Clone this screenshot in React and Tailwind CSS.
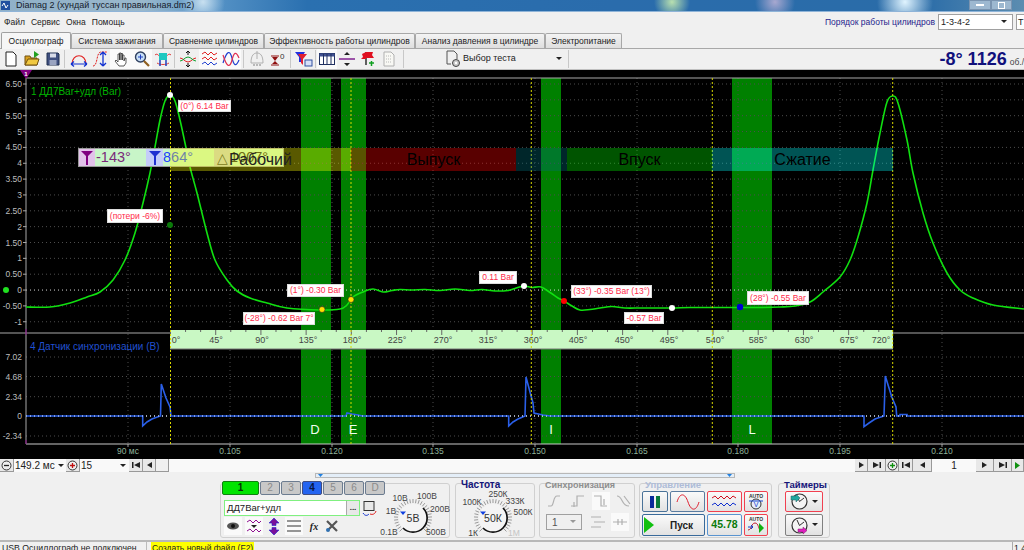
import React from 'react'

// --- chart data, in page pixels ---
const pressure = [[26,307],[50,307],[70,303],[87,297],[100,292],[113,280],[125,260],[135,233],[143,203],[150,173],[155,147],[160,120],[165,101],[170,95],[175,101],[180,120],[185,143],[190,167],[197,193],[207,233],[215,260],[227,280],[237,291],[250,298],[267,303],[287,308],[320,310],[340,309],[347,305],[353,297],[363,292],[373,289],[383,292],[392,290.5],[400,289.5],[412,290],[425,289.5],[440,290.5],[455,289],[470,290.5],[482,289.5],[495,291],[508,290.5],[515,288.5],[524,286],[532,287.5],[541,287],[550,292.5],[558,298],[564,301],[572,306],[580,310],[590,309.5],[600,308],[612,306.5],[625,308],[640,308],[655,308],[672,308],[690,307.5],[710,307.5],[725,307.5],[740,307.5],[760,307.5],[780,307],[795,306],[810,302],[823,292],[840,277],[850,260],[858,237],[867,203],[873,170],[880,133],[887,102],[893,96],[898,103],[907,140],[913,173],[923,213],[933,243],[947,273],[960,290],[973,298],[993,305],[1024,309]]

const sync = '26,416 142.7,416 142.7,426 147,422 152,419 160,416 160.5,416 161.3,384 166,398 170,407 171,416 346,416 347,413 352,414 358,415 362,416 508.7,416 508.7,426 513,422 518,419 525,416 526,377 530,392 533,403 534,413 543,415 550,416 864,416 864,426.7 869,423 875,419 884,416 885.3,376 889,388 891.7,396.7 896,407 896.7,416 900,416 900,414.5 907,414.5 907,416 1024,416'

const smooth = (pts) => {
  let d = `M${pts[0][0]} ${pts[0][1]}`
  for (let i = 0; i < pts.length - 1; i++) {
    const p0 = pts[i - 1] || pts[i], p1 = pts[i], p2 = pts[i + 1], p3 = pts[i + 2] || p2
    d += ` C${p1[0] + (p2[0] - p0[0]) / 6} ${p1[1] + (p2[1] - p0[1]) / 6} ${p2[0] - (p3[0] - p1[0]) / 6} ${p2[1] - (p3[1] - p1[1]) / 6} ${p2[0]} ${p2[1]}`
  }
  return d
}

const yTicks = ['6.50','6','5.50','5','4.50','4','3.50','3','2.50','2','1.50','1','0.50','0','-0.50','-1']
const syncTicks = [['7.02',357],['4.68',376.5],['2.34',396.7],['0',416],['-2.34',436]]
const timeTicks = [['90 мс',128],['0.105',230],['0.120',332],['0.135',433],['0.150',535],['0.165',637],['0.180',738],['0.195',840],['0.210',942]]
const rulerLabels = [['0°',176],['45°',216],['90°',262],['135°',308],['180°',352],['225°',397],['270°',443],['315°',488],['360°',533],['405°',578],['450°',624],['495°',669],['540°',715],['585°',758],['630°',804],['675°',849],['720°',881]]
const bands = [[301,30,'D',315],[341,25,'E',353],[541,20,'I',551],[732,40,'L',752]]
const cursors = [170.5,351,531.3,712.3,892.7]

function Chart() {
  return (
    <svg className="absolute inset-0" width="1024" height="389" viewBox="0 70 1024 389" fontFamily="Liberation Sans, sans-serif">
      {bands.map(([x, w]) => <rect key={x} x={x} y="78" width={w} height="366" fill="#008000" />)}

      {/* сетка */}
      {yTicks.map((t, i) => {
        const y = 84 + i * 15.85
        return (
          <g key={t}>
            <line x1="26" x2="1024" y1={y} y2={y} stroke={t === '0' ? '#d8d8d8' : '#4d4d4d'} strokeDasharray="1 3" />
            <line x1="23" x2="26" y1={y} y2={y} stroke="#aaa" />
            <text x="22" y={y + 3} textAnchor="end" fontSize="8.5" fill="#bdbdbd">{t}</text>
          </g>
        )
      })}
      {syncTicks.map(([t, y]) => (
        <g key={t}>
          <line x1="26" x2="1024" y1={y} y2={y} stroke={t === '0' ? '#d8d8d8' : '#4d4d4d'} strokeDasharray="1 3" />
          <text x="22" y={y + 3} textAnchor="end" fontSize="8.5" fill="#bdbdbd">{t}</text>
        </g>
      ))}
      {timeTicks.map(([t, x]) => (
        <g key={t}>
          <line x1={x} x2={x} y1="78" y2="444" stroke="#4d4d4d" strokeDasharray="1 3" />
          <line x1={x} x2={x} y1="444" y2="447" stroke="#999" />
          <text x={x} y="454" textAnchor="middle" fontSize="8.5" fill="#8fb39a">{t}</text>
        </g>
      ))}

      <line x1="26" x2="1024" y1="78" y2="78" stroke="#a8a8a8" />
      <line x1="0" x2="1024" y1="333" y2="333" stroke="#a8a8a8" />
      <line x1="26" x2="1024" y1="444" y2="444" stroke="#c8c8c8" />
      <line x1="26" x2="26" y1="78" y2="444" stroke="#a8a8a8" />
      <path d="M20 70h12l-6 9z" fill="#800080" />
      <text x="26" y="76" textAnchor="middle" fontSize="6" fontWeight="bold" fill="#fff">1</text>
      <line x1="26" x2="26" y1="329" y2="335" stroke="#800080" />
      <line x1="26" x2="26" y1="440" y2="444" stroke="#800080" />

      <path d={smooth(pressure)} fill="none" stroke="#10e010" strokeWidth="1.6" />
      <polyline points={sync} fill="none" stroke="#2a5fe8" strokeWidth="1.6" />
      <line x1="26" x2="1024" y1="416" y2="416" stroke="#d8e4ff" strokeDasharray="1 3" />

      {/* линейка углов */}
      <rect x="170" y="330" width="723" height="19" fill="#c9f8c4" />
      <line x1="170" x2="893" y1="349" y2="349" stroke="#777" />
      {Array.from({ length: 48 }, (_, i) => (
        <line key={i} x1={170.5 + i * 15.07} x2={170.5 + i * 15.07} y1="330" y2={i % 3 === 0 ? 335 : 332} stroke="#666" />
      ))}
      {rulerLabels.map(([t, x]) => <text key={t} x={x} y="343" textAnchor="middle" fontSize="9" fill="#444">{t}</text>)}

      {cursors.map((x) => <line key={x} x1={x} x2={x} y1="78" y2="444" stroke="#d8d800" strokeDasharray="2 2" />)}

      {bands.map(([x, , l, cx]) => <text key={l} x={cx} y="434" textAnchor="middle" fontSize="13" fill="#f0fff0">{l}</text>)}

      <circle cx="170" cy="95" r="3" fill="#fff" />
      <circle cx="170" cy="225" r="3" fill="#0a7a0a" />
      <circle cx="322" cy="309.5" r="3" fill="#ffe000" stroke="#222" strokeWidth=".6" />
      <circle cx="351" cy="299.5" r="3" fill="#ffe000" stroke="#222" strokeWidth=".6" />
      <circle cx="524" cy="286" r="3" fill="#fff" />
      <circle cx="564" cy="301" r="3" fill="#f00" />
      <circle cx="672" cy="308" r="3" fill="#fff" />
      <circle cx="740" cy="307" r="3.200" fill="#0000d0" />
      <circle cx="6" cy="290" r="3" fill="#20e020" />
    </svg>
  )
}

const tags = [
  ['(0°) 6.14 Bar', 'left-[178px] top-[30px] w-[53px] h-[12px]'],
  ['(потери -6%)', 'left-[107px] top-[139px] w-[56px] h-[14px]'],
  ['(1°) -0.30 Bar', 'left-[287px] top-[214px] w-[57px] h-[13px]'],
  ['(-28°) -0.62 Bar 7°', 'left-[243px] top-[242px] w-[72px] h-[13px]'],
  ['0.11 Bar', 'left-[479px] top-[201px] w-[38px] h-[13px]'],
  ['(33°) -0.35 Bar (13°)', 'left-[571px] top-[215px] w-[81px] h-[13px]'],
  ['-0.57 Bar', 'left-[624px] top-[242px] w-[40px] h-[12px]'],
  ['(28°) -0.55 Bar', 'left-[747px] top-[221px] w-[62px] h-[14px]'],
]

const Funnel = ({ color }) => (
  <svg width="14" height="16" viewBox="0 0 14 16"><path d="M1 1h12L8 6v9H6V6z" fill={color} /></svg>
)

function Scope() {
  return (
    <div className="relative h-[389px] w-full shrink-0 overflow-hidden bg-black">
      <Chart />
      <div className="absolute left-[31px] top-[15px] text-[10px] leading-[14px] text-[#00b400]">1 ДД7Bar+удл (Bar)</div>
      <div className="absolute left-[30px] top-[270px] text-[10px] leading-[14px] text-[#2050d0]">4 Датчик синхронизации (В)</div>

      {/* панель курсоров */}
      <div className="absolute left-[78px] top-[78px] flex h-[19px] w-[206px] items-center border border-[#9a9a9a] text-[14.5px] leading-none">
        <div className="flex h-full w-[16px] items-center justify-center bg-[#e2c2ea]"><Funnel color="#800080" /></div>
        <div className="flex h-full w-[51px] items-center bg-[#c8f5c8] pl-px text-[#7a2a7a]">-143°</div>
        <div className="flex h-full w-[17px] items-center justify-center bg-[#c4ccf8]"><Funnel color="#2030d0" /></div>
        <div className="flex h-full w-[51px] items-center bg-[#c8f5c8] text-[#2040ff]">864°</div>
        <div className="flex h-full w-[16px] items-center justify-center bg-[#c8c8c8] text-[14px] text-[#333]">△</div>
        <div className="flex h-full flex-1 items-center bg-[#c8f5c8] text-[#222]">1007°</div>
      </div>

      {/* фазы цикла */}
      <div className="absolute left-[170px] top-[78px] flex h-[23px] items-center text-[16px] leading-none text-black">
        <div className="flex h-full w-[181px] items-center justify-center bg-[rgba(255,255,0,0.35)] text-[#222]">Рабочий</div>
        <div className="flex h-full w-[165px] items-center justify-center bg-[rgba(255,0,0,0.35)]">Выпуск</div>
        <div className="h-full w-[51px] bg-[rgba(0,110,120,0.35)]" />
        <div className="flex h-full w-[145px] items-center justify-center bg-[rgba(0,255,0,0.33)]">Впуск</div>
        <div className="flex h-full w-[181px] items-center justify-center bg-[rgba(0,255,255,0.33)]">Сжатие</div>
      </div>

      {tags.map(([t, pos]) => (
        <div key={t} className={`absolute ${pos} flex items-center justify-center whitespace-nowrap border border-[#ddd] bg-white text-[8.5px] leading-none text-[#ff2a4a]`}>{t}</div>
      ))}
    </div>
  )
}

// --- иконки панели инструментов ---
const I = ({ children, s = 18 }) => <svg width={s} height={s} viewBox="0 0 18 18" fill="none">{children}</svg>

const icons = {
  doc: <I><path d="M4 2h7l3 3v11H4z" fill="#fff" stroke="#222" /></I>,
  open: <I><path d="M2 6h5l1 2h6v7H2z" fill="#d8a020" stroke="#705010" /><path d="M2 15l3-6h11l-2 6z" fill="#f0c840" stroke="#705010" /><path d="M11 1l5 3.5-5 3.5z" fill="#20a020" /></I>,
  save: <I><path d="M3 3h11l1 1v11H3z" fill="#405080" stroke="#203050" /><rect x="6" y="3.500" width="6" height="4" fill="#d8dce8" /><rect x="5.500" y="10" width="7" height="5" fill="#9aa4c0" /></I>,
  arc: <I><path d="M2 14C2 3 16 3 16 14" stroke="#e02020" strokeWidth="1.2" /><path d="M1 14h16M1 14l3-2.500M1 14l3 2.500M17 14l-3-2.500M17 14l-3 2.500" stroke="#1030d0" strokeWidth="1.2" /></I>,
  arcV: <I><path d="M2 16C7 16 5 2 10 2h6" stroke="#e02020" strokeDasharray="2 1" /><path d="M12 2v14M12 2l-3 3M12 2l3 3M12 16l-3-3M12 16l3-3" stroke="#1030d0" strokeWidth="1.3" /></I>,
  hand: <I><path d="M7 16l-4-5 1-1 2 2V4h1.500v6V3H9v7V3.500h1.500V10V5H12v6l1-3h1v5l-2 3z" fill="#fff" stroke="#333" strokeWidth=".8" /></I>,
  zoom: <I><circle cx="7.500" cy="7" r="5" fill="#c8e0f8" stroke="#304060" strokeWidth="1.400" /><path d="M5 7h5M7.500 4.500v5" stroke="#2040c0" /><path d="M11 11l5 5" stroke="#906020" strokeWidth="2.200" /></I>,
  teal: <I><path d="M1 5c3-3 4 3 8 3s5-6 8-3" stroke="#e04040" /><rect x="5" y="3" width="8" height="7" fill="#20c8c0" /><path d="M3 13c3 2 9 2 12 0" stroke="#e04040" /><path d="M6 10v6M12 10v6" stroke="#2040c0" strokeWidth="1.500" /></I>,
  cross: <I><path d="M1 8c3 0 5 4 8 4s5-4 8-4" stroke="#e02020" /><path d="M1 11c3 0 5-4 8-4s5 4 8 4" stroke="#10a030" /><path d="M9 1v4M9 13v4M7 3l2-2 2 2M7 15l2 2 2-2" stroke="#111" /></I>,
  waves: <I><path d="M1 4l3-2 3 3 3-3 3 3 3-2M1 9l3-2 3 3 3-3 3 3 3-2" stroke="#e02020" /><path d="M1 14l3-2 3 3 3-3 3 3 3-2" stroke="#2040d0" /></I>,
  waves2: <I><path d="M1 13C5 0 8 0 10 8s4 9 7 2" stroke="#2040d0" strokeWidth="1.200" /><path d="M1 5c4 13 7 13 9 5s4-9 7-2" stroke="#e03050" strokeWidth="1.200" /></I>,
  bell: <I><path d="M3 13C3 5 6 3 9 3s6 2 6 10z" stroke="#b0b0b0" /><path d="M9 1v8" stroke="#b0b0b0" /><path d="M5 15h8" stroke="#b8b8b8" strokeWidth="2" strokeDasharray="2 1" /></I>,
  zero: <I><path d="M2 6h8M2 15h8" stroke="#901010" /><path d="M3 7l3 4 3-4zM3 14l3-3 3 3z" fill="#901010" /><text x="11" y="9" fontSize="8" fill="#333" fontFamily="Liberation Sans">0</text></I>,
  filter: <I><path d="M0 2h10L7 7v5H4V7z" fill="#2030e0" /><path d="M3 4h9l-4 5v6l-2-2V9z" fill="#e02030" /><rect x="10" y="10" width="7" height="6" fill="#d8e0f8" stroke="#3050a0" /></I>,
  table: <I><rect x="1.500" y="3.500" width="15" height="11" fill="#fff" stroke="#203060" /><rect x="1.500" y="3.500" width="15" height="3" fill="#405090" /><path d="M5.500 4v10M9 4v10M13 4v10" stroke="#203060" /></I>,
  split: <I><path d="M1 9h16" stroke="#802090" strokeWidth="1.500" /><path d="M6 5h6L9 2zM6 13h6l-3 3z" fill="#222" /></I>,
  flag: <I><path d="M7 2v13" stroke="#222" strokeWidth="1.400" /><path d="M7 2l-4 2 1 3-2 2h5zM7 2h7l-1 3 2 3H7z" fill="#e01020" /><path d="M10 13h5M12.500 11v5" stroke="#10a020" strokeWidth="1.500" /></I>,
  list: <I><path d="M4 2h7l3 3v11H4z" fill="#f8f8f4" stroke="#b0b0b0" /><path d="M6 6h6M6 9h6M6 12h6" stroke="#b8b8b8" strokeDasharray="1 1" /></I>,
  test: <I><path d="M3 1h7l3 3v5M3 1v13h4" stroke="#555" /><circle cx="12" cy="13" r="3.500" fill="#c8c8c8" stroke="#444" /><circle cx="12" cy="13" r="1.200" fill="#fff" /></I>,
}

const Tool = ({ name, w = 'w-[21px]', on }) => (
  <div className={`flex h-[20px] shrink-0 items-center justify-center ${w} ${on ? 'bg-[#fafafa]' : ''}`}>{icons[name]}</div>
)
const Sep = ({ m = 'mx-[1px]' }) => <div className={`h-[18px] w-px shrink-0 bg-[#c8c8c8] ${m}`} />

function Toolbar() {
  return (
    <div className="flex h-[22px] shrink-0 items-center border-b border-t border-b-[#c0c0c0] border-t-[#a8a8a8] bg-[#f0f0f0]">
      <Tool name="doc" />
      <Tool name="open" />
      <Tool name="save" />
      <Sep m="mr-[3px] ml-[1px]" />
      <Tool name="arc" />
      <Tool name="arcV" />
      <Tool name="hand" on />
      <Tool name="zoom" on />
      <Tool name="teal" />
      <Sep m="mr-[2px] ml-[1px]" />
      <Tool name="cross" w="w-[22px]" />
      <Tool name="waves" w="w-[21px]" on />
      <Tool name="waves2" on />
      <Sep m="mx-[2px]" />
      <Tool name="bell" />
      <Tool name="zero" />
      <Sep m="mx-[2px]" />
      <Tool name="filter" />
      <Sep m="mx-[1px]" />
      <Tool name="table" w="w-[20px]" on />
      <Tool name="split" w="w-[20px]" />
      <Tool name="flag" />
      <Tool name="list" />
      <Sep m="ml-[4px] mr-[40px]" />
      <Tool name="test" w="w-[18px]" />
      <span className="ml-[1px] w-[93px] text-[9px]">Выбор теста</span>
      <svg width="6" height="4"><path d="M0 0h6L3 3z" fill="#222" /></svg>
      <Sep m="ml-[6px]" />
      <div className="ml-auto flex items-baseline whitespace-nowrap font-bold leading-none text-[#10107c]">
        <span className="text-[18px]">-8° 1126</span>
        <span className="ml-[3px] text-[8.5px] font-normal text-[#444]">об./</span>
      </div>
    </div>
  )
}

const tabs = [
  ['Система зажигания', 'w-[92px]'],
  ['Сравнение цилиндров', 'w-[101px]'],
  ['Эффективность работы цилиндров', 'w-[151px]'],
  ['Анализ давления в цилиндре', 'w-[130px]'],
  ['Электропитание', 'w-[77px]'],
]

// --- нижняя панель ---
const Btn = ({ children, w = 'w-[14px]', bg = 'bg-[#e8e8e8]' }) => (
  <div className={`flex h-[13px] shrink-0 items-center justify-center border-b border-r border-[#999] ${w} ${bg}`}>{children}</div>
)
const First = () => <svg width="8" height="6"><path d="M0 0h1.500v6H0zM8 0v6L2 3z" fill="#222" /></svg>
const Last = () => <svg width="8" height="6"><path d="M8 0H6.500v6H8zM0 0v6l6-3z" fill="#222" /></svg>
const Prev = () => <svg width="5" height="6"><path d="M5 0v6L0 3z" fill="#222" /></svg>
const Next = () => <svg width="5" height="6"><path d="M0 0v6l5-3z" fill="#222" /></svg>
const Caret = () => <svg width="6" height="4"><path d="M0 0h6L3 3z" fill="#222" /></svg>
const Round = ({ sign, color }) => (
  <svg width="11" height="11"><circle cx="5.500" cy="5.500" r="4.500" fill="#eee" stroke="#333" /><path d={sign === '+' ? 'M3 5.500h5M5.500 3v5' : 'M3 5.500h5'} stroke={color} strokeWidth="1.300" /></svg>
)

function Nav() {
  return (
    <div className="flex h-[13px] shrink-0 items-center bg-[#f9f9f9] text-[10px] leading-none text-[#222]">
      <Btn><Round sign="-" color="#222" /></Btn>
      <div className="flex w-[52px] items-center justify-between pl-px pr-[2px]"><span>149.2 мс</span><Caret /></div>
      <Btn><Round sign="+" color="#c01010" /></Btn>
      <div className="flex w-[49px] items-center justify-between pl-px pr-[3px]"><span>15</span><Caret /></div>
      <Btn><First /></Btn>
      <Btn w="w-[13px]"><Prev /></Btn>
      <Btn w="w-[13px]" bg="bg-[#f0f0f0]" />
      <div className="ml-auto flex items-center">
        <Btn w="w-[13px]"><Next /></Btn>
        <Btn w="w-[18px]"><Last /></Btn>
        <Btn w="w-[13px]"><Round sign="+" color="#109010" /></Btn>
        <Btn><First /></Btn>
        <Btn w="w-[19px]"><Prev /></Btn>
        <div className="w-[44px] text-center">1</div>
        <Btn w="w-[18px]"><Next /></Btn>
        <Btn w="w-[18px]"><Last /></Btn>
        <Btn w="w-[12px]"><svg width="5" height="7"><path d="M0 0v7l5-3.500z" fill="#109010" /></svg></Btn>
      </div>
    </div>
  )
}

function Knob({ value, labels, w = 70, marker }) {
  const cx = 33, cy = 28
  return (
    <svg width={w} height="48" viewBox={`0 0 ${w} 48`} fontFamily="Liberation Sans, sans-serif" className="shrink-0">
      {Array.from({ length: 29 }, (_, i) => {
        const a = ((135 + i * 9.64) * Math.PI) / 180
        return <line key={i} x1={cx + Math.cos(a) * 15} y1={cy + Math.sin(a) * 15} x2={cx + Math.cos(a) * 19} y2={cy + Math.sin(a) * 19} stroke="#999" />
      })}
      <circle cx={cx} cy={cy} r="14" fill="#f4f4f4" />
      <path d={`M${cx - 10} ${cy + 10}A14 14 0 0 0 ${cx + 10} ${cy - 10}`} fill="none" stroke="#111" strokeWidth="1.700" />
      <path d={marker} fill="#1040e0" />
      <text x={cx} y={cy + 4} textAnchor="middle" fontSize="10.500" fill="#333">{value}</text>
      {labels.map(([t, x, y, gray]) => <text key={t} x={x} y={y} textAnchor="middle" fontSize="8.500" fill={gray ? '#c4c4c4' : '#444'}>{t}</text>)}
    </svg>
  )
}

const Ch = ({ n, w = 'w-[20px]', tone = 'gray' }) => (
  <div className={`flex h-[14px] shrink-0 items-center justify-center rounded-[2px] border text-[10px] font-bold leading-none ${w} ${
    tone === 'green' ? 'border-[#108010] bg-[#00e400] text-[#063006]'
      : tone === 'blue' ? 'border-[#404c80] bg-[#2464f0] text-[#0a1440]'
      : 'border-[#6c7c90] bg-[#c8c8c8] font-normal text-[#8a8a8a]'}`}>{n}</div>
)

const Panel = ({ title, tone, w, children }) => (
  <div className={`relative h-[55px] shrink-0 rounded-[3px] border border-[#d0d0d0] ${w}`}>
    {title && <div className={`absolute left-[5px] top-[-4px] font-bold leading-[10px] ${tone}`}>{title}</div>}
    {children}
  </div>
)

const Small = ({ children, on }) => (
  <div className={`flex h-[18px] w-[18px] shrink-0 items-center justify-center ${on ? 'bg-[#fafafa]' : ''}`}>{children}</div>
)

const Cb = ({ w, border, children }) => (
  <div className={`flex items-center justify-center rounded-[2px] border bg-gradient-to-b from-[#fafafa] to-[#e2e2e2] ${w} ${border}`}>{children}</div>
)

const Clock = ({ marker }) => (
  <svg width="18" height="19" viewBox="0 0 18 19">
    <circle cx="9.500" cy="9.500" r="7.500" fill="#f4f4f4" stroke="#333" strokeWidth="1.200" />
    <path d="M9.500 9.500L7 4M9.500 9.500L14 6" stroke="#333" />
    {marker}
  </svg>
)

const SyncIcon = ({ d, on }) => (
  <div className={`flex h-[18px] w-[18px] items-center justify-center ${on ? 'bg-[#fafafa]' : ''}`}>
    <svg width="16" height="16" fill="none"><path d={d} stroke="#b0b0b0" strokeWidth="1.200" /></svg>
  </div>
)

function Bottom() {
  return (
    <div className="flex min-h-0 flex-1 flex-col bg-[#f0f0f0]">
      <div className="ml-[315px] mt-[1px] flex h-[5px] w-[420px] shrink-0 items-center justify-between border border-[#b8b8b8] bg-[#e4eef8] px-[2px]">
        <svg width="5" height="3"><path d="M0 0h5L2.500 3z" fill="#2080e0" /></svg>
        <svg width="5" height="3"><path d="M0 0h5L2.500 3z" fill="#2080e0" /></svg>
      </div>
      <div className="ml-[220px] mt-[5px] flex h-[55px] shrink-0 items-start">
        {/* канал */}
        <Panel w="w-[230px]">
          <div className="flex h-full">
            <div className="w-[141px] shrink-0">
              <div className="ml-[1px] mt-[-3px] flex w-max gap-px">
                <Ch n="1" w="w-[37px]" tone="green" />
                <Ch n="2" />
                <Ch n="3" />
                <Ch n="4" tone="blue" />
                <Ch n="5" />
                <Ch n="6" />
                <Ch n="D" />
              </div>
              <div className="ml-[3px] mt-[5px] flex h-[16px] w-[136px] items-center border border-[#80f080] bg-white pl-[2px] text-[9.500px] leading-none text-[#222]">
                <span className="flex-1">ДД7Bar+удл</span>
                <div className="flex h-[14px] w-[13px] items-center justify-center border-l border-[#aaa] bg-[#e8e8e8] text-[8px] font-bold">...</div>
              </div>
              <div className="ml-[3px] mt-[1px] flex items-center">
                <Small on><svg width="14" height="10"><ellipse cx="7" cy="5" rx="6" ry="3.500" fill="#555" /><circle cx="7" cy="5" r="2" fill="#111" /></svg></Small>
                <div className="w-[3px]" />
                <Small on><svg width="16" height="14" fill="none"><path d="M1 3l3-2 3 3 3-3 3 3 2-2M1 12l3-2 3 3 3-3 3 3 2-2" stroke="#901090" /><path d="M5 6h6L8 9z" fill="#222" /></svg></Small>
                <div className="w-[2px]" />
                <Small><svg width="12" height="17"><path d="M6 0l5 5H8v2.500H4V5H1zM6 17l5-5H8V9.500H4V12H1z" fill="#7a109a" stroke="#2020d0" strokeWidth=".6" /></svg></Small>
                <div className="w-[2px]" />
                <Small on><svg width="16" height="12"><path d="M1 1h14M1 6h14M1 11h14" stroke="#333" /></svg></Small>
                <div className="w-[2px]" />
                <Small><span className="font-['Liberation_Serif'] text-[10px] font-bold italic">fx</span></Small>
                <Small><svg width="14" height="14"><path d="M2 2l10 10M12 2L3 11" stroke="#555" strokeWidth="2.200" /><circle cx="3" cy="11" r="2" fill="#3070b0" /></svg></Small>
              </div>
            </div>
            <div className="mt-[17px] w-[18px] shrink-0">
              <svg width="15" height="16" fill="none"><rect x="2" y="0.500" width="10" height="9" fill="#e8e8e8" stroke="#333" /><path d="M1 12c2 3 4 3 6 1" stroke="#1030d0" /><path d="M8 13c3 1 5 0 6-3" stroke="#e02020" /></svg>
            </div>
            <div className="pt-[6px]">
              <Knob value="5В" w={70} marker="M20 21.500h6l-3 3.500z" labels={[['10В', 20, 11], ['100В', 47, 9], ['200В', 60, 22], ['500В', 56, 45], ['0.1В', 9, 45], ['1В', 11, 24]]} />
            </div>
          </div>
        </Panel>

        {/* частота */}
        <Panel title="Частота" tone="text-[10px] text-[#14147a]" w="ml-[5px] w-[80px]">
          <div className="pl-[4px] pt-[6px]">
            <Knob value="50К" w={75} marker="M20 21.500h6l-3 3.500z" labels={[['100К', 12, 15], ['250К', 38, 7], ['333К', 55, 14], ['500К', 63, 25], ['1К', 13, 46], ['1М', 54, 46, true]]} />
          </div>
        </Panel>

        {/* синхронизация */}
        <Panel title="Синхронизация" tone="text-[9px] text-[#8e8e8e]" w="ml-[4px] w-[96px]">
          <div className="grid grid-cols-4 gap-x-[4px] pl-[6px] pt-[8px]">
            <SyncIcon d="M1 13h3c3 0 2-10 6-10h3" />
            <SyncIcon d="M1 13h6V3h7M4 9v5" />
            <SyncIcon on d="M1 3h7v10h6M11 6v6" />
            <SyncIcon d="M1 3c6 0 4 10 12 10M8 3l6 8" />
          </div>
          <div className="mt-[3px] flex items-center pl-[6px]">
            <div className="flex h-[16px] w-[36px] items-center justify-between border border-[#a0a0a0] pl-[5px] pr-[5px] text-[10px] text-[#555]">
              <span>1</span>
              <svg width="6" height="4"><path d="M0 0h6L3 3z" fill="#999" /></svg>
            </div>
            <div className="ml-[7px]"><SyncIcon d="M1 3h10M4 8h11M1 13h10" /></div>
            <div className="ml-[4px]"><SyncIcon on d="M1 8h14M6 5v6M10 5v6" /></div>
          </div>
        </Panel>

        {/* управление */}
        <Panel title="Управление" tone="text-[9.500px] text-[#aebcd8]" w="ml-[4px] w-[133px]">
          <div className="flex flex-col gap-[2px] pl-[2px] pt-[7px]">
            <div className="flex h-[21px] gap-[2px]">
              <Cb w="w-[26px]" border="border-[#4a7298]"><svg width="10" height="12"><rect width="4" height="12" fill="#0a2a9a" /><rect x="6" width="4" height="12" fill="#0a7a3a" /></svg></Cb>
              <Cb w="w-[35px]" border="border-[#5a7ca0]"><svg width="24" height="16" fill="none"><path d="M1 8C4-2 9-1 12 8s8 10 11 0" stroke="#e02030" /></svg></Cb>
              <Cb w="w-[35px]" border="border-[#f04050]"><svg width="28" height="15" fill="none"><path d="M1 4l3-2 3 3 3-3 3 3 3-3 3 3 3-3 3 2" stroke="#d01020" /><path d="M1 11l3-2 3 3 3-3 3 3 3-3 3 3 3-3 3 2" stroke="#1030d0" /></svg></Cb>
              <Cb w="w-[24px]" border="border-[#f04050]"><svg width="18" height="18" fill="none"><text x="9" y="5" textAnchor="middle" fontSize="5" fontWeight="bold" fill="#333" fontFamily="Liberation Sans">AUTO</text><circle cx="9" cy="11" r="5" stroke="#333" fill="#e8eef8" /><path d="M2 8h14" stroke="#1040d0" /><text x="9" y="14" textAnchor="middle" fontSize="7" fill="#1040d0" fontFamily="Liberation Sans">V</text></svg></Cb>
            </div>
            <div className="flex h-[22px] gap-[2px]">
              <Cb w="w-[63px]" border="border-[#3a6a9a]">
                <svg width="10" height="16" className="mr-[16px]"><path d="M0 0l10 8-10 8z" fill="#10c010" /></svg>
                <span className="pr-[10px] text-[10px] font-bold text-[#222]">Пуск</span>
              </Cb>
              <Cb w="w-[35px]" border="border-[#5a94d0]"><span className="text-[10.500px] font-bold text-[#0a7a0a]">45.78</span></Cb>
              <Cb w="w-[24px]" border="border-[#f04050]"><svg width="18" height="18" fill="none"><text x="9" y="5" textAnchor="middle" fontSize="5" fontWeight="bold" fill="#333" fontFamily="Liberation Sans">AUTO</text><path d="M1 14c4 0 3-7 7-7s3 7 6 7" stroke="#c02030" /><path d="M1 11h5M4 9l2 2-2 2" stroke="#1040d0" /><path d="M12 7l5 5-5 5z" fill="#10b010" /></svg></Cb>
            </div>
          </div>
        </Panel>

        {/* таймеры */}
        <Panel title="Таймеры" tone="text-[9.500px] text-[#14147a]" w="ml-[6px] w-[52px]">
          <div className="flex flex-col items-center gap-[2px] pt-[7px]">
            <Cb w="h-[21px] w-[38px] gap-[4px]" border="border-[#f04050]">
              <Clock marker={<path d="M1 4h5V2l4 4-4 4V8H1z" fill="#20a8a0" stroke="#206060" strokeWidth=".5" />} />
              <Caret />
            </Cb>
            <Cb w="h-[22px] w-[38px] gap-[4px]" border="border-[#808080]">
              <Clock marker={<path d="M8 13h5v-2l4 3.500-4 3.500v-2H8z" fill="#e020c0" stroke="#802070" strokeWidth=".5" />} />
              <Caret />
            </Cb>
          </div>
        </Panel>
      </div>
      <div className="mt-[2px] h-[2px] shrink-0 bg-[#b8b8b8]" />
    </div>
  )
}

export default function App() {
  return (
    <div className="flex h-[550px] w-[1024px] flex-col overflow-hidden bg-[#f0f0f0] font-['Liberation_Sans',sans-serif] text-[#222]">
      {/* заголовок окна */}
      <div className="relative flex h-[12px] shrink-0 items-center overflow-hidden border-b border-[#8fb4d8] bg-[radial-gradient(circle_at_203px_2px,#c8e0f0_0,transparent_22px),radial-gradient(circle_at_672px_2px,#b8e0b0_0,transparent_18px),radial-gradient(circle_at_775px_2px,#a8a8d0_0,transparent_20px),radial-gradient(circle_at_905px_2px,#e0f4ff_0,transparent_28px),linear-gradient(90deg,#8fb0c8_0%,#9ab8cc_14%,#5a96c8_20%,#2a70b0_30%,#2a6cac_60%,#2a6ca8_90%,#5c8db0_100%)] pl-[1px]">
        <svg width="10" height="10" className="mr-[5px] shrink-0"><rect width="9" height="9" fill="#2050a0" /><path d="M1 5l2-3 2 5 2-3" stroke="#fff" fill="none" /></svg>
        <span className="text-[9px] leading-none text-[#15202c]">Diamag 2 (хундай туссан правильная.dm2)</span>
        <div className="absolute right-[12px] top-0 flex h-[10px]">
          <div className="flex w-[22px] items-center justify-center border border-[#7a94b0] bg-[#9db8d0]"><div className="h-[2px] w-[8px] bg-white" /></div>
          <div className="flex w-[21px] items-center justify-center border border-[#7a94b0] bg-[#9db8d0]"><div className="h-[7px] w-[7px] border border-white" /></div>
        </div>
      </div>

      {/* меню */}
      <div className="flex h-[20px] shrink-0 items-center pl-[4px] text-[8.500px] leading-none">
        <span className="mr-[6px]">Файл</span>
        <span className="mr-[6px]">Сервис</span>
        <span className="mr-[6px]">Окна</span>
        <span>Помощь</span>
        <span className="ml-auto mr-[3px] text-[#24248c]">Порядок работы цилиндров</span>
        <div className="flex h-[16px] w-[75px] items-center justify-between border border-[#a0a0a0] bg-white pl-[2px] pr-[5px] text-[9px]">
          <span>1-3-4-2</span>
          <Caret />
        </div>
        <div className="ml-[3px] flex h-[16px] w-[8px] items-center border border-r-0 border-[#a0a0a0] bg-white pl-px text-[9px]">T</div>
      </div>

      {/* вкладки */}
      <div className="flex h-[16px] shrink-0 items-end whitespace-nowrap pl-[1px] text-[8.500px] leading-none">
        <div className="z-10 mb-[-1px] flex h-[17px] w-[70px] items-center justify-center rounded-t-[2px] border border-b-0 border-[#a0a0a0] bg-[#f6f6f6]">Осциллограф</div>
        {tabs.map(([t, w]) => (
          <div key={t} className={`flex h-[15px] items-center justify-center rounded-t-[2px] border border-b-0 border-[#a8a8a8] bg-gradient-to-b from-[#f4f4f4] to-[#dedede] ${w}`}>{t}</div>
        ))}
      </div>

      <Toolbar />
      <Scope />
      <Nav />
      <Bottom />

      {/* статус */}
      <div className="flex h-[8px] shrink-0 items-start overflow-hidden whitespace-nowrap text-[8.700px] leading-[12px]">
        <span className="ml-[2px] w-[144px]">USB Осциллограф не подключен</span>
        <div className="h-full w-px bg-[#bbb]" />
        <span className="ml-[4px] bg-[#ffff00] px-px text-[8.500px]">Создать новый файл (F2)</span>
        <span className="ml-auto w-[12px] overflow-hidden border-l border-[#aaa] pl-px">1.4</span>
      </div>
    </div>
  )
}
